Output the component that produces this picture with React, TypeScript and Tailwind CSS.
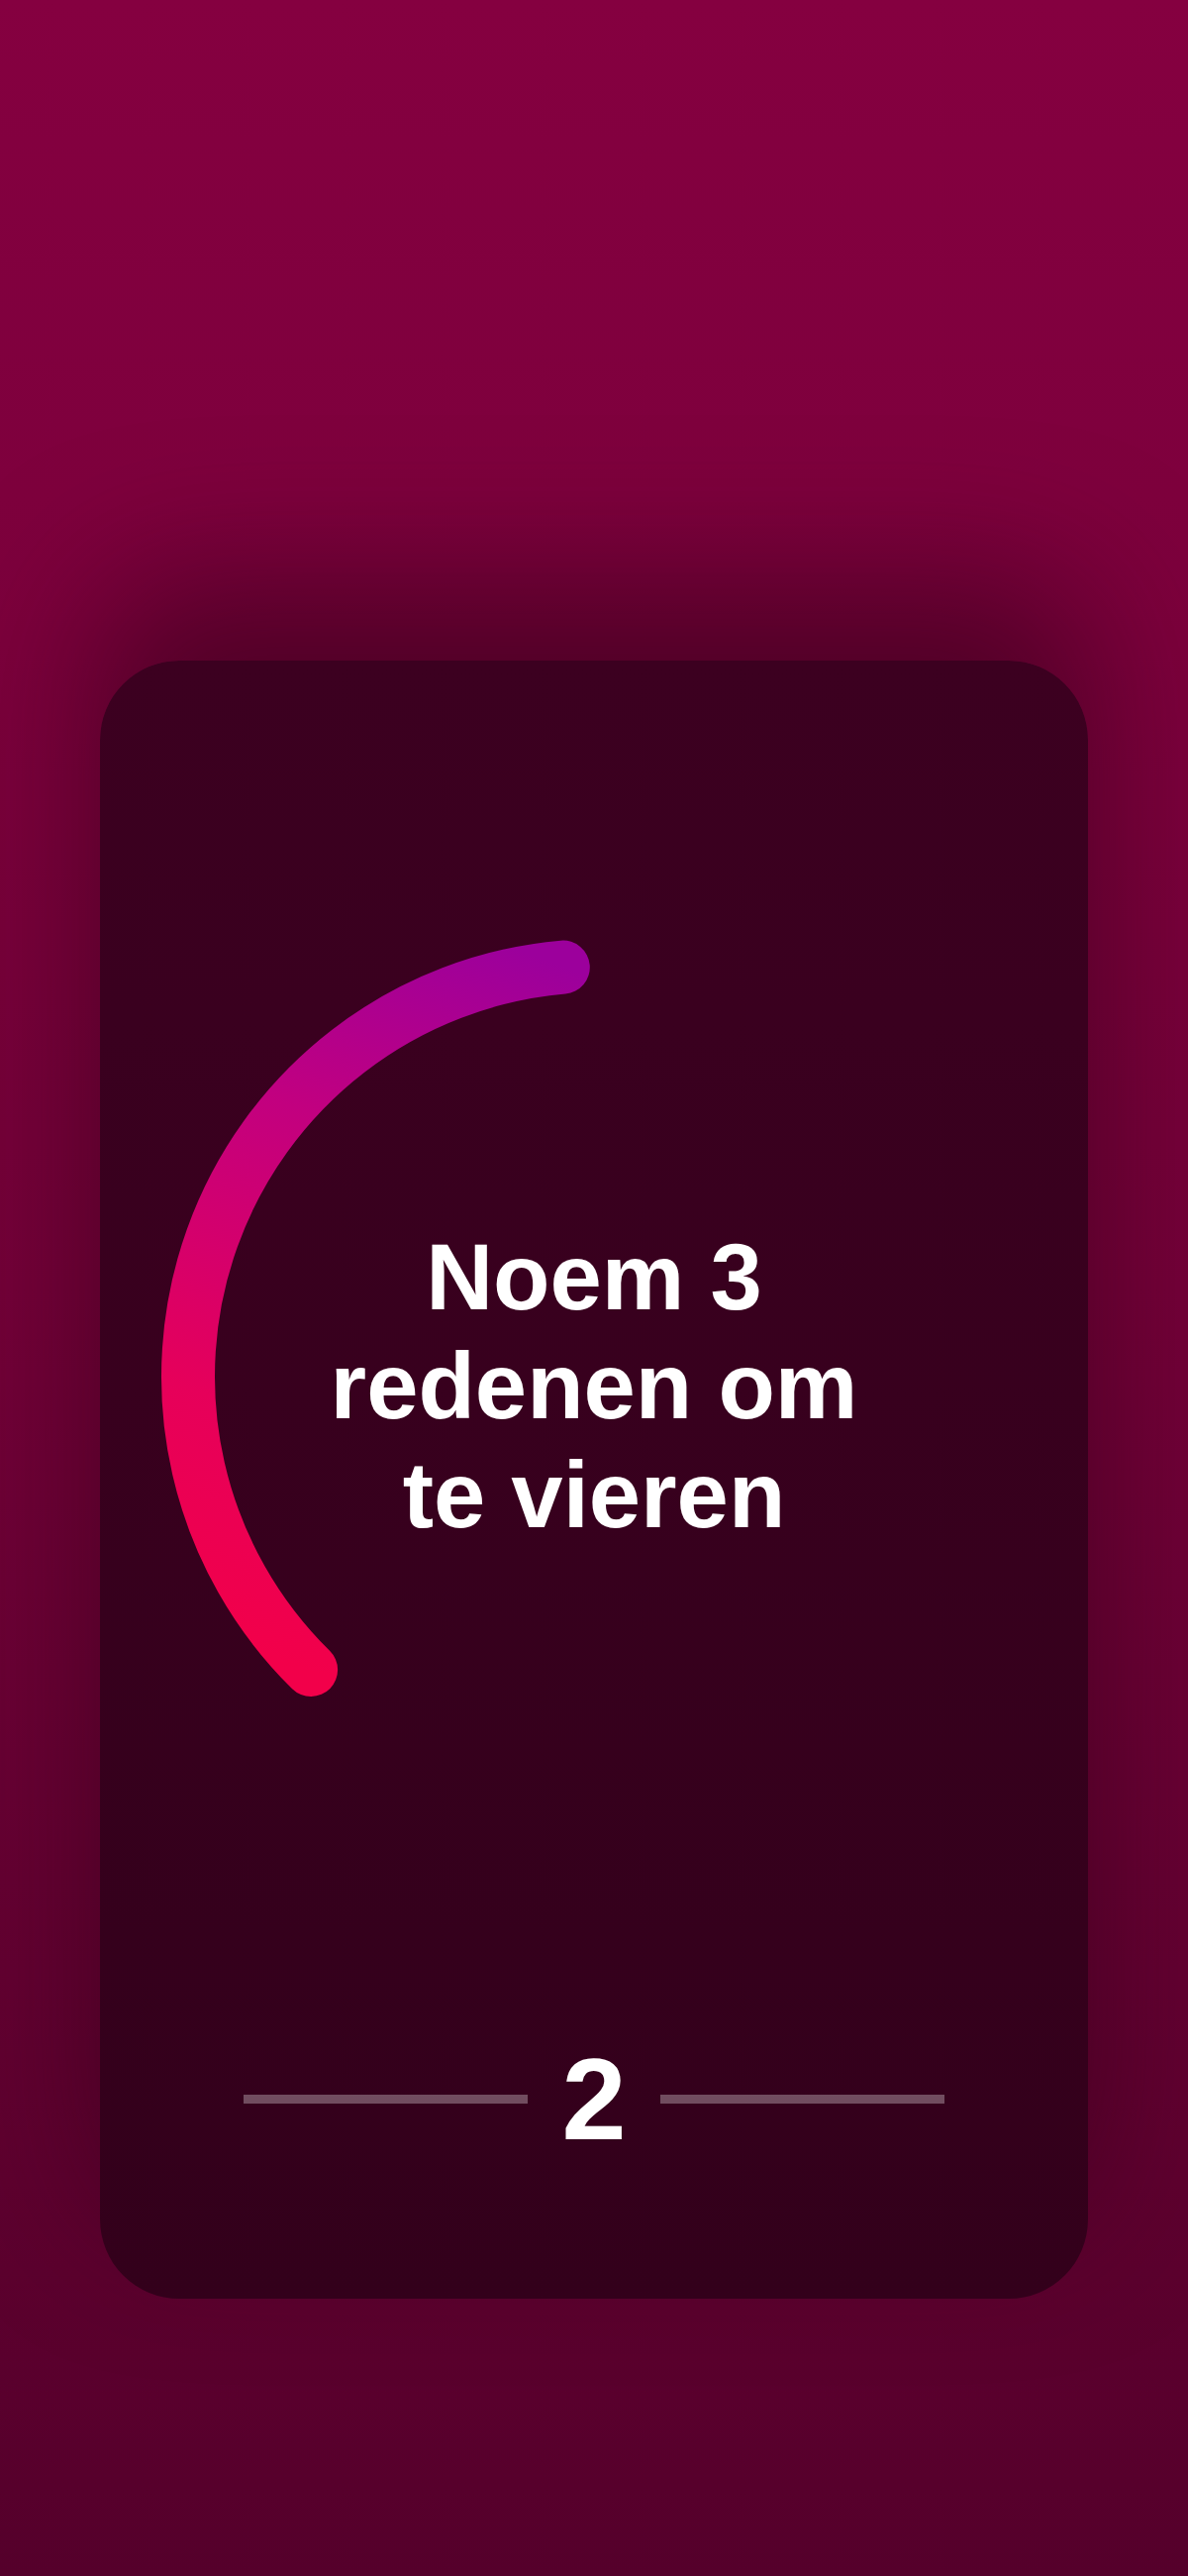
import React from 'react';

const FONT = { fontFamily: '"Liberation Sans", Arial, sans-serif' };

function TimerArc() {
  return (
    <svg className="absolute inset-0 h-full w-full" viewBox="0 0 998 1000" fill="none">
      <defs>
        <linearGradient id="arcGrad" gradientUnits="userSpaceOnUse" x1="469" y1="86" x2="212" y2="797">
          <stop offset="0" stopColor="#9c009c" />
          <stop offset="0.3" stopColor="#c2007f" />
          <stop offset="0.7" stopColor="#e6005a" />
          <stop offset="1" stopColor="#f2004a" />
        </linearGradient>
      </defs>
      <path
        d="M 467.8 86.6 A 415 415 0 0 0 213.1 796"
        stroke="url(#arcGrad)"
        strokeWidth="54"
        strokeLinecap="round"
      />
    </svg>
  );
}

export default function App() {
  return (
    <div
      className="flex min-h-[2601px] w-full justify-center bg-linear-to-b from-[#850040] via-[#730038] to-[#55002b] pt-[667px]"
      style={FONT}
    >
      <div className="flex h-[1654px] w-[998px] flex-col rounded-[80px] bg-linear-to-b from-[#3c0020] to-[#33001b] shadow-[0_-80px_140px_0px_rgba(45,0,22,0.55)]">
        <div className="relative mt-[223px] flex h-[1000px] items-center justify-center">
          <TimerArc />
          <p className="relative max-w-[560px] pt-5 text-center text-[94px] font-bold leading-[110px] text-white">
            Noem 3 redenen om te vieren
          </p>
        </div>

        <div className="mt-[171px] flex items-center justify-center gap-[34px]">
          <div className="h-[9px] w-[287px] bg-white/30" />
          <span className="text-[117px] font-bold leading-none text-white">2</span>
          <div className="h-[9px] w-[287px] bg-white/30" />
        </div>
      </div>
    </div>
  );
}
